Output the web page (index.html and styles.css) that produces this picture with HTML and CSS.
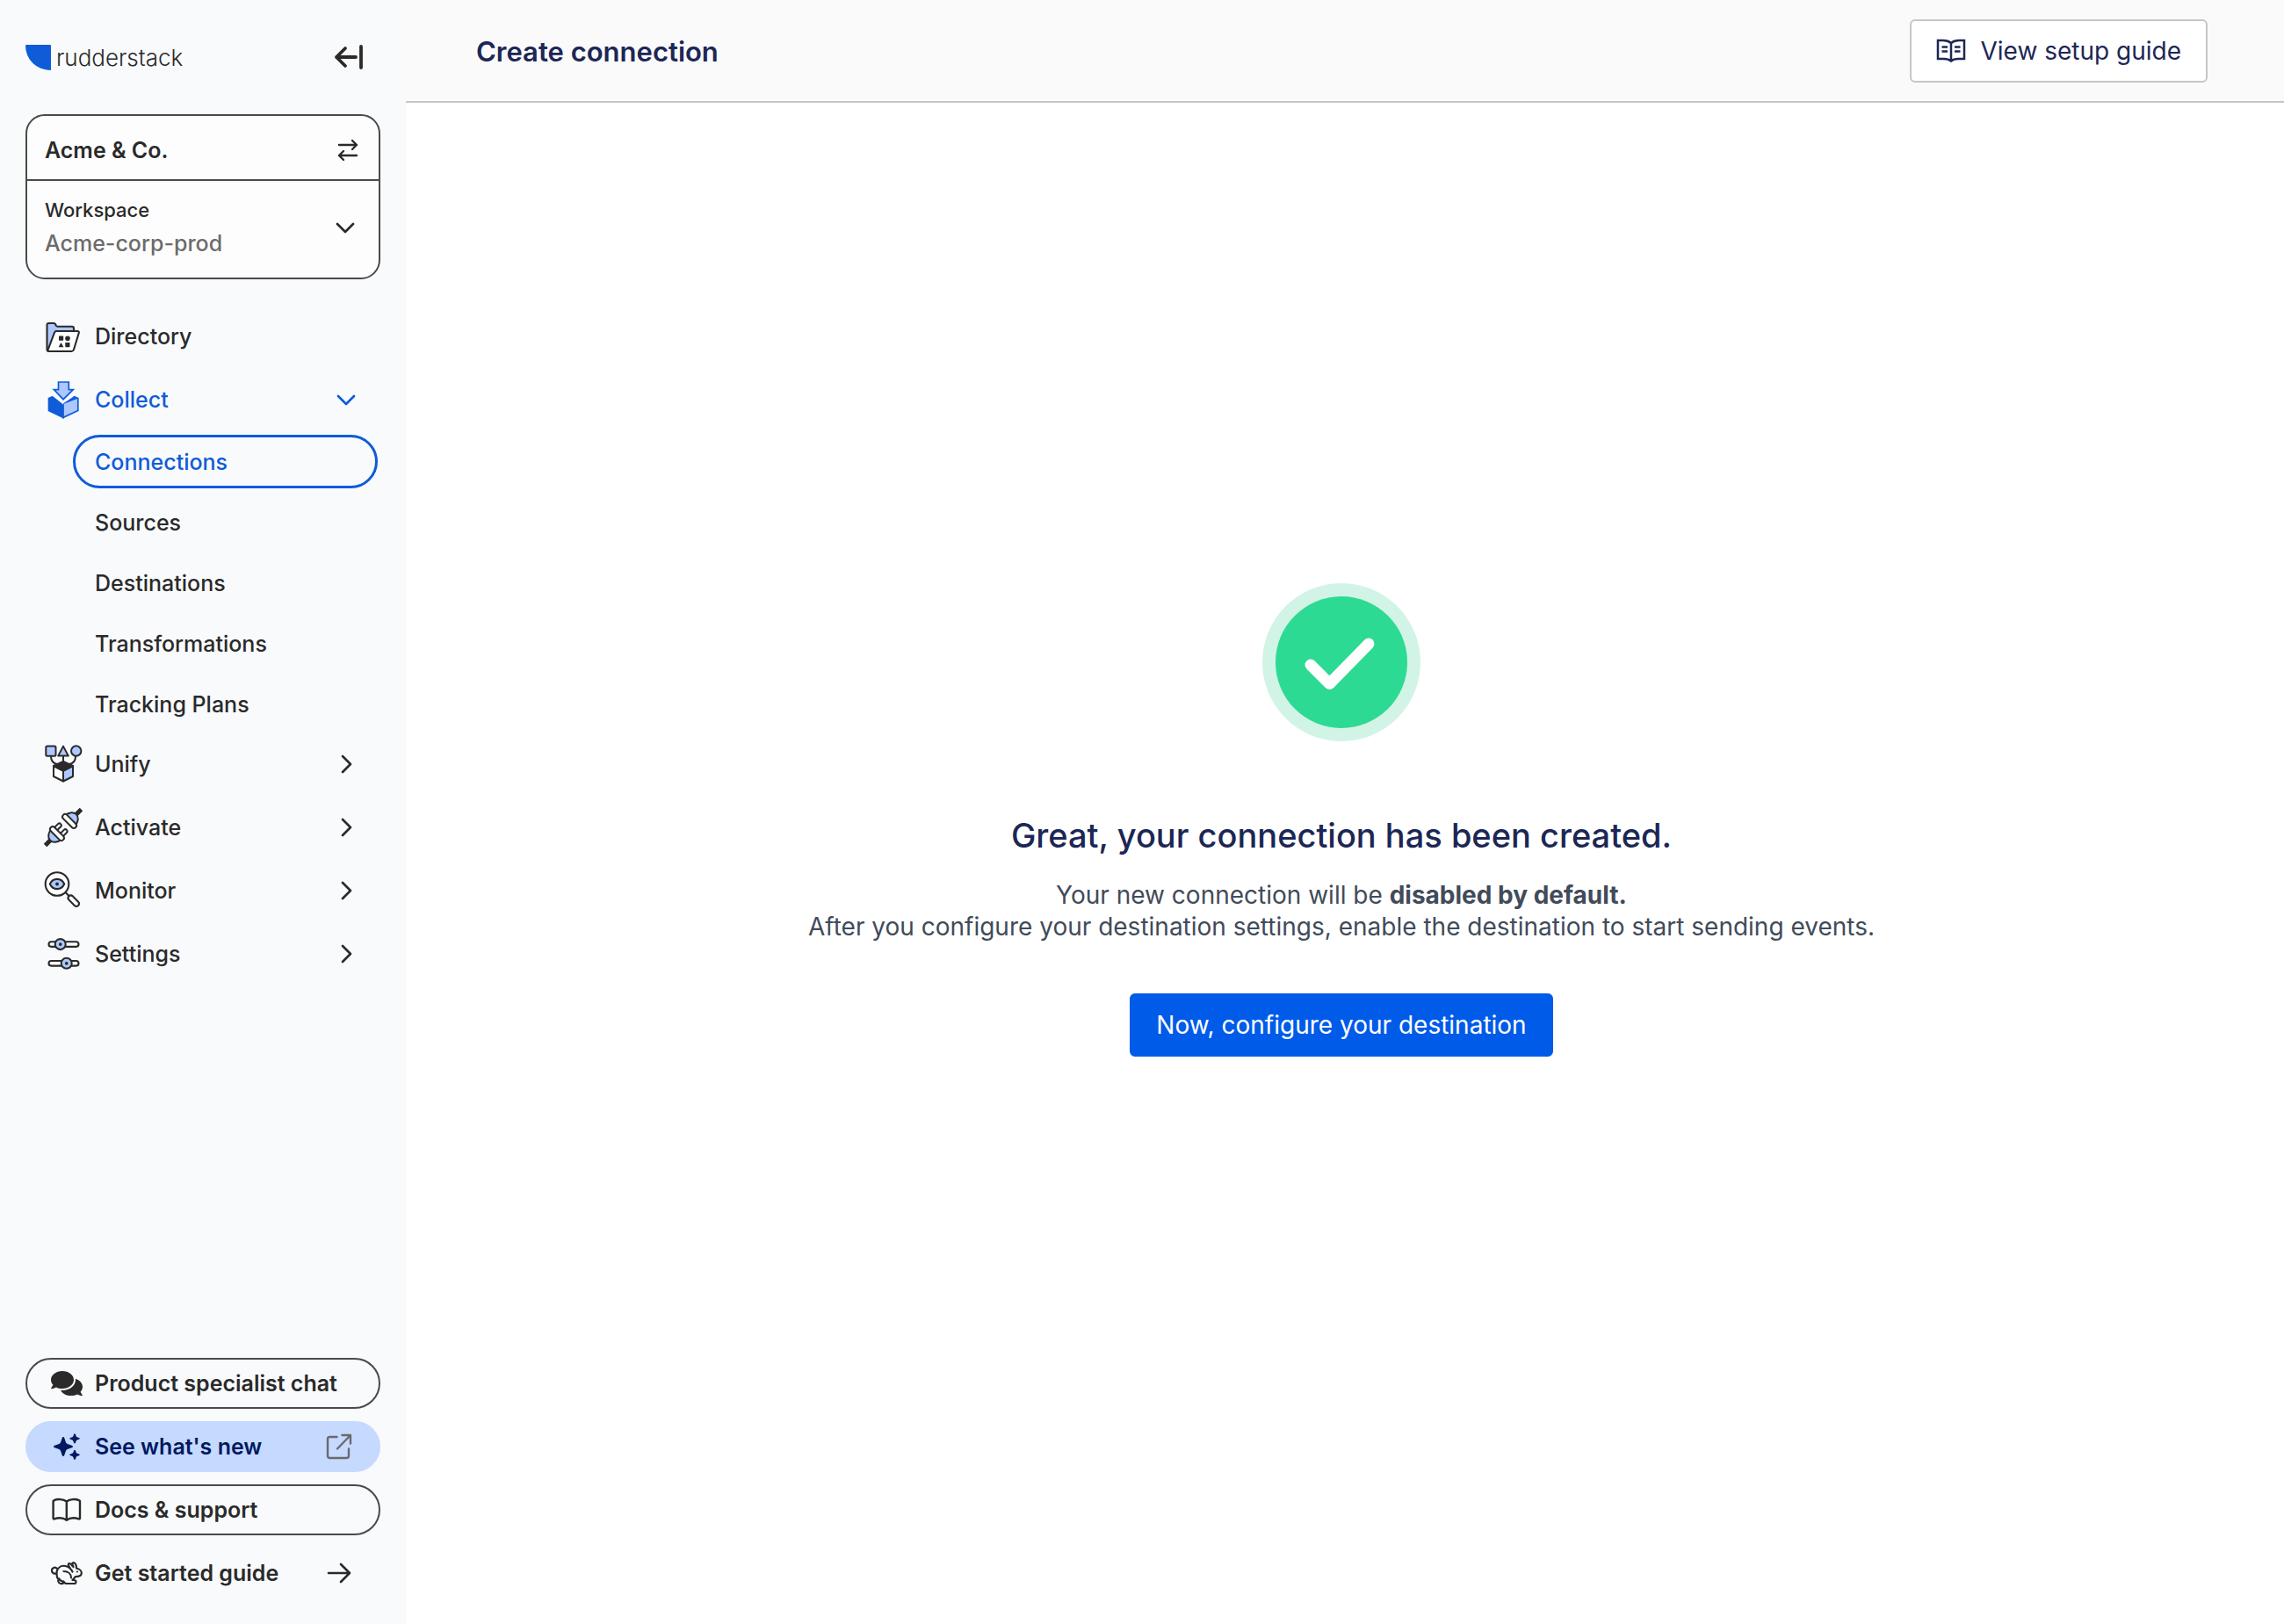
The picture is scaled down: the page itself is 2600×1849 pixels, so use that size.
FILE: index.html
```html
<!DOCTYPE html>
<html lang="en">
<head>
<meta charset="utf-8">
<title>Create connection</title>
<link rel="stylesheet" href="styles.css">
</head>
<body>
<svg class="defs" aria-hidden="true">
  <symbol id="chev-right" viewBox="0 0 24 24"><path d="M8 3l9 9-9 9" fill="none" stroke="currentColor" stroke-width="2.7" stroke-linecap="round" stroke-linejoin="round"/></symbol>
  <symbol id="chev-down" viewBox="0 0 24 24"><path d="M3 8l9 9 9-9" fill="none" stroke="currentColor" stroke-width="2.7" stroke-linecap="round" stroke-linejoin="round"/></symbol>
</svg>
<div class="app">
  <aside class="sidebar">
    <div class="brand-row">
      <a class="brand" href="#">
        <svg class="brand-mark" viewBox="0 0 29 29"><path d="M1 0h27q1 0 1 1v27q0 1-1 1A28 28 0 0 1 0 1q0-1 1-1z" fill="#0f5cd8"/></svg>
        <span>rudderstack</span>
      </a>
      <button class="icon-button" type="button" aria-label="Collapse sidebar">
        <svg class="collapse" viewBox="0 0 34 30"><path d="M25 15H3M13 5L3 15l10 10M31 3v24" fill="none" stroke="currentColor" stroke-width="3.8" stroke-linecap="round" stroke-linejoin="round"/></svg>
      </button>
    </div>

    <div class="account">
      <button class="account-org" type="button">
        <span>Acme &amp; Co.</span>
        <svg class="icon-swap" viewBox="0 0 24 26"><path d="M2 7h20M17 2l5 5-5 5M22 19H2M7 14l-5 5 5 5" fill="none" stroke="currentColor" stroke-width="2.4" stroke-linecap="round" stroke-linejoin="round"/></svg>
      </button>
      <button class="account-workspace" type="button">
        <span class="workspace-text">
          <span class="workspace-label">Workspace</span>
          <span class="workspace-name">Acme-corp-prod</span>
        </span>
        <svg class="chev"><use href="#chev-down"/></svg>
      </button>
    </div>

    <nav class="nav">
      <a class="nav-item" href="#">
        <svg class="nav-icon" viewBox="0 0 44 44" stroke="#2a2a2a" stroke-width="2.1" stroke-linejoin="round">
          <path d="M5 39q-1.500-.5-1.500-2V9q0-2 2-2h6q1 0 1.500 1l1 2q.5.700 1.500.700H32q2 0 2 2V16H14L5 39z" fill="#adc8ff"/>
          <path d="M14.500 16H38q2.500 0 1.700 2.300L34 37q-.6 2-2.500 2H6q-2 0-1.300-2l7.300-19.300q.6-1.700 2.500-1.700z" fill="#fff"/>
          <g stroke="none" fill="#2a2a2a"><rect x="17" y="21.500" width="5.200" height="5.200" rx=".6"/><circle cx="27" cy="24.200" r="2.800"/><path d="M19.500 29l2.900 5.200h-5.800z"/><rect x="24.300" y="29" width="5.200" height="5.200" rx=".6"/></g>
        </svg>
        <span>Directory</span>
      </a>
      <a class="nav-item nav-item-open" href="#">
        <svg class="nav-icon" viewBox="0 0 44 44" stroke="#0f5cd8" stroke-width="1.700">
          <path d="M5.500 20.500l6-2.500L22 26.500v16L5.500 34.500z" fill="#0f5cd8"/>
          <path d="M38.800 20.500L33 18 22 26.500v15.800l16.800-7.800z" fill="#adc8ff"/>
          <path d="M10 16l12 9.500L34 16" fill="none" stroke="#f9fafc" stroke-width="3"/>
          <path d="M22 26.300l11.500-7.300 5.300 1.800L22 27z" fill="#0f5cd8" stroke="none"/>
          <path d="M16.500 2h11.800v8.700h5L22 21.700 11.400 10.700h5.100z" fill="#adc8ff"/>
        </svg>
        <span>Collect</span>
        <svg class="chev"><use href="#chev-down"/></svg>
      </a>
      <div class="subnav">
        <a class="sub-item sub-item-active" href="#">Connections</a>
        <a class="sub-item" href="#">Sources</a>
        <a class="sub-item" href="#">Destinations</a>
        <a class="sub-item" href="#">Transformations</a>
        <a class="sub-item" href="#">Tracking Plans</a>
      </div>
      <a class="nav-item" href="#">
        <svg class="nav-icon" viewBox="0 0 44 44" stroke="#2a2a2a" stroke-width="2" stroke-linejoin="round">
          <g fill="#adc8ff"><rect x="2.300" y="1.500" width="11.200" height="11.200" rx="1.500"/><path d="M22 1.600l5.800 11H16.200z"/><circle cx="36.700" cy="7" r="5.700"/></g>
          <path d="M8 13c0 4 2 8 7 9M36 13c0 4-2 8-7 9M22 13v6" fill="none"/>
          <path d="M11 24l11 5.500v12L11 36z" fill="#fff"/><path d="M33 24l-11 5.500v12L33 36z" fill="#adc8ff"/><path d="M22 19l11 5-11 5.500L11 24z" fill="#2a2a2a"/>
        </svg>
        <span>Unify</span>
        <svg class="chev"><use href="#chev-right"/></svg>
      </a>
      <a class="nav-item" href="#">
        <svg class="nav-icon" viewBox="0 0 44 44" stroke="#2a2a2a" stroke-width="2">
          <g transform="translate(22 22) rotate(45)">
            <path d="M0-20v-9M0 20v9" stroke-width="5"/>
            <path d="M-8-11c0-6 4-10 8-10s8 4 8 10zM-8 11c0 6 4 10 8 10s8-4 8-10z" fill="#adc8ff"/>
            <path d="M-7 8V1.500a2.200 2.200 0 0 1 4.400 0V8M2.600 8V1.500a2.200 2.200 0 0 1 4.400 0V8" fill="#fff"/>
            <rect x="-10" y="-13" width="20" height="6" rx="3" fill="#fff"/>
            <rect x="-10" y="7" width="20" height="6" rx="3" fill="#fff"/>
          </g>
        </svg>
        <span>Activate</span>
        <svg class="chev"><use href="#chev-right"/></svg>
      </a>
      <a class="nav-item" href="#">
        <svg class="nav-icon" viewBox="0 0 44 44" stroke="#2a2a2a" stroke-width="2.100">
          <circle cx="15" cy="14.500" r="13.300" fill="#fff"/>
          <path d="M6.800 14.500c3.500-7.500 12.900-7.500 16.400 0-3.500 7.500-12.900 7.500-16.400 0z" fill="#adc8ff"/>
          <circle cx="15" cy="14.500" r="1.900" fill="#2a2a2a" stroke="none"/>
          <path d="M24.500 24l4.500 4.500"/>
          <rect x="-3" y="-1" width="15" height="6" rx="3" transform="translate(32 29) rotate(45)" fill="#fff"/>
        </svg>
        <span>Monitor</span>
        <svg class="chev"><use href="#chev-right"/></svg>
      </a>
      <a class="nav-item" href="#">
        <svg class="nav-icon" viewBox="0 0 44 44" stroke="#2a2a2a" stroke-width="2.100">
          <g fill="#fff"><rect x="5.500" y="8.300" width="34" height="5.600" rx="2.800"/><rect x="5.500" y="30" width="34" height="5.600" rx="2.800"/></g>
          <g fill="#adc8ff"><circle cx="18.700" cy="11.100" r="6"/><circle cx="25.700" cy="32.800" r="6"/></g>
          <g fill="#2a2a2a" stroke="none"><circle cx="18.700" cy="11.100" r="1.900"/><circle cx="25.700" cy="32.800" r="1.900"/></g>
        </svg>
        <span>Settings</span>
        <svg class="chev"><use href="#chev-right"/></svg>
      </a>
    </nav>

    <div class="help">
      <button class="pill pill-outline" type="button">
        <svg class="pill-icon" viewBox="0 -32 576 576"><path fill="currentColor" d="M416 192c0-88.400-93.100-160-208-160S0 103.600 0 192c0 34.300 14.100 65.900 38 92-13.400 30.200-35.500 54.200-35.800 54.500-2.200 2.300-2.800 5.700-1.500 8.700S4.800 352 8 352c36.600 0 66.900-12.300 88.700-25 32.200 15.700 70.300 25 111.300 25 114.900 0 208-71.600 208-160zm122 220c23.900-26 38-57.700 38-92 0-66.900-53.500-124.200-129.300-148.100.9 6.600 1.300 13.300 1.300 20.100 0 105.900-107.700 192-240 192-10.800 0-21.300-.8-31.700-1.900C207.800 439.600 281.800 480 368 480c41 0 79.100-9.200 111.300-25 21.800 12.700 52.100 25 88.700 25 3.200 0 6.100-1.900 7.300-4.800 1.300-2.900.7-6.300-1.500-8.700-.3-.3-22.400-24.200-35.800-54.500z"/></svg>
        <span>Product specialist chat</span>
      </button>
      <a class="pill pill-new" href="#">
        <svg class="pill-icon" viewBox="0 0 36 36" fill="currentColor"><path d="M14 7q1 0 1.300 1.200l1.700 5q.5 1.300 1.800 1.800l5 1.700q1.200.3 1.200 1.300t-1.200 1.300l-5 1.700q-1.300.5-1.800 1.800l-1.700 5Q15 29 14 29t-1.300-1.200l-1.700-5q-.5-1.300-1.800-1.800l-5-1.700Q3 19 3 18t1.200-1.300l5-1.700q1.300-.5 1.800-1.800l1.700-5Q13 7 14 7z"/><path d="M27 3.200q.7 0 1 1l.7 2.100q.3.700 1 1l2.100.7q1 .3 1 .8t-1 .9l-2.100.7q-.7.300-1 1l-.7 2.100q-.3 1-1 1t-1-1l-.7-2.100q-.3-.7-1-1l-2.100-.7q-1-.4-1-.9t1-.8l2.100-.7q.7-.3 1-1l.7-2.100q.3-1 1-1z"/><path d="M27 21.700q.7 0 1 1l.7 2.100q.3.700 1 1l2.100.7q1 .3 1 .8t-1 .9l-2.100.7q-.7.300-1 1l-.7 2.100q-.3 1-1 1t-1-1l-.7-2.100q-.3-.7-1-1l-2.100-.7q-1-.4-1-.9t1-.8l2.100-.7q.7-.3 1-1l.7-2.100q.3-1 1-1z"/></svg>
        <span>See what's new</span>
        <svg class="pill-end pill-end-muted" viewBox="0 0 30 30"><path d="M12.500 4H4.500Q2 4 2 6.500v19Q2 28 4.500 28h19q2.500 0 2.500-2.500v-8M18.500 2H28v9.500M28 2L13 17.500" fill="none" stroke="currentColor" stroke-width="2.400" stroke-linecap="round" stroke-linejoin="round"/></svg>
      </a>
      <a class="pill pill-outline" href="#">
        <svg class="pill-icon" viewBox="0 0 36 36"><path d="M17.800 8.500C14 5.500 7 5.500 3.300 7.300q-.7.300-.7 1V27.500q0 1.300 1.200.9C8 27 14 27 17.800 29.700 21.500 27 27.500 27 31.800 28.400q1.200.4 1.200-.9V8.300q0-.7-.7-1C28.500 5.500 21.500 5.500 17.800 8.500V29" fill="none" stroke="currentColor" stroke-width="2.400" stroke-linejoin="round"/></svg>
        <span>Docs &amp; support</span>
      </a>
      <a class="pill" href="#">
        <svg class="pill-icon" viewBox="0 0 36 36" fill="none" stroke="currentColor" stroke-width="2.200" stroke-linecap="round" stroke-linejoin="round">
          <path d="M7 13A3.400 3.400 0 1 0 5.800 18.300M6.800 15.500C8.500 11 12.500 9 16.500 10c4 1 6.500 3.500 8 6.500M14.500 16c5 0 8.500 3 8.500 7.500M21.500 12C19.500 9.500 19.300 7.500 20.700 7.200c1.300-.2 2.800 1 3.800 2.800M25.500 11C24 8 24.200 6 25.500 6c2.200.5 3.500 3 3.500 6.500 3.500.7 6 3.200 5.800 5.800-.3 2.500-3.300 3.700-6.800 3.700L24.500 26H26q2.500 0 2.500 2t-2 2H17L8 24.500C6.500 22.500 6.300 19 6.800 15.500M14.500 27.500c1 1.500-.5 3-3.500 2.500-3-.5-3.500-4-1.500-5.500"/>
          <circle cx="30" cy="16.500" r="1.100" fill="currentColor" stroke="none"/>
        </svg>
        <span>Get started guide</span>
        <svg class="pill-end" viewBox="0 0 30 30"><path d="M3 15h24M17 5l10 10-10 10" fill="none" stroke="currentColor" stroke-width="2.600" stroke-linecap="round" stroke-linejoin="round"/></svg>
      </a>
    </div>
  </aside>

  <div class="page">
    <header class="topbar">
      <h1>Create connection</h1>
      <button class="button" type="button">
        <svg class="guide-icon" viewBox="0 0 34 28"><path d="M17 5Q13.500 2 8 2H2v21h7q5 0 8 2.500Q20 23 25 23h7V2h-6q-5.500 0-9 3v20M6.500 9.500H13M6.500 14.500H13M21 9.500h6.500M21 14.500h6.500" fill="none" stroke="currentColor" stroke-width="2.500"/></svg>
        <span>View setup guide</span>
      </button>
    </header>
    <main class="content">
      <svg class="success" viewBox="0 0 180 180"><circle cx="90" cy="90" r="90" fill="#d2f4e6"/><circle cx="90" cy="90" r="75" fill="#2dda93"/><path d="M55 93l21.500 21.500L121 69" fill="none" stroke="#fff" stroke-width="13" stroke-linecap="round" stroke-linejoin="round"/></svg>
      <h2>Great, your connection has been created.</h2>
      <p>Your new connection will be <strong>disabled by default.</strong><br>After you configure your destination settings, enable the destination to start sending events.</p>
      <button class="button button-primary" type="button">Now, configure your destination</button>
    </main>
  </div>
</div>
</body>
</html>
```
FILE: styles.css
```css
* { box-sizing: border-box; }

body {
  margin: 0;
  font-family: Inter, "Liberation Sans", sans-serif;
  font-size: 25px;
  font-weight: 500;
  color: #2a2a2a;
  background: #fff;
}

a { color: inherit; text-decoration: none; }
button { font: inherit; color: inherit; cursor: pointer; }
svg { display: block; flex: none; }
.defs { position: absolute; width: 0; height: 0; }

.app { display: flex; min-height: 100vh; }

/* Sidebar */
.sidebar {
  flex: none;
  width: 462px;
  display: flex;
  flex-direction: column;
  padding: 29px;
  background: #f9fafc;
}

.brand-row {
  display: flex;
  align-items: center;
  justify-content: space-between;
  height: 72px;
  padding-right: 19px;
}
.brand { display: flex; align-items: center; gap: 6px; font-size: 26px; font-weight: 300; }
.brand-mark { width: 29px; height: 29px; }
.icon-button { padding: 0; border: 0; background: none; }
.collapse { width: 34px; height: 30px; }

.account {
  margin-top: 29px;
  border: 2px solid #4a4a4a;
  border-radius: 22px;
  background: #fdfdfe;
  overflow: hidden;
}
.account button {
  display: flex;
  align-items: center;
  justify-content: space-between;
  width: 100%;
  border: 0;
  background: none;
  text-align: left;
}
.account .account-org { height: 74px; padding: 6px 23px 0 20px; border-bottom: 2px solid #4a4a4a; font-weight: 600; }
.account .account-workspace { height: 110px; padding: 0 26px 4px 20px; }
.icon-swap { width: 24px; height: 26px; }
.workspace-text { display: flex; flex-direction: column; }
.workspace-label { font-size: 22px; line-height: 36px; }
.workspace-name { line-height: 40px; color: #6b6b6b; }
.chev { width: 24px; height: 24px; margin-left: auto; }

.nav { margin-top: 29px; }
.nav-item {
  display: flex;
  align-items: center;
  height: 72px;
  gap: 14px;
  padding: 0 27px 0 21px;
}
.nav-icon { width: 44px; height: 44px; }
.nav-item-open, .sub-item-active { color: #0f5cd8; }
.subnav {
  display: flex;
  flex-direction: column;
  gap: 8px;
  padding: 4px 3px 2px 54px;
}
.sub-item {
  display: flex;
  align-items: center;
  height: 61px;
  padding-left: 22px;
  border: 3px solid transparent;
  border-radius: 31px;
}
.sub-item-active { border-color: #0f5cd8; }

.help { display: flex; flex-direction: column; gap: 14px; margin-top: auto; }
.pill {
  display: flex;
  align-items: center;
  gap: 14px;
  height: 58px;
  padding: 0 30px 0 27px;
  border: 2px solid transparent;
  border-radius: 29px;
  background: none;
  font-weight: 600;
}
.pill-outline { border-color: #4a4a4a; }
.pill-new { background: #c6d9ff; border-color: #c6d9ff; color: #00195f; }
.pill-icon { width: 36px; height: 36px; }
.pill-end { width: 30px; height: 30px; margin-left: auto; }
.pill-end-muted { color: #6b6b6b; }

/* Page */
.page { flex: 1; display: flex; flex-direction: column; }
.topbar {
  display: flex;
  align-items: center;
  justify-content: space-between;
  height: 117px;
  padding: 0 87px 0 80px;
  border-bottom: 2px solid #c4c6c8;
  background: #fafafa;
  color: #1c2755;
}
h1 { margin: 0; padding-top: 2px; font-size: 31px; font-weight: 600; }
.button {
  display: flex;
  align-items: center;
  gap: 16px;
  height: 72px;
  padding: 0 28px;
  border: 2px solid #c4c6c8;
  border-radius: 6px;
  background: #fff;
  font-size: 28px;
  font-weight: 400;
}
.guide-icon { width: 34px; height: 28px; }

.content {
  flex: 1;
  display: flex;
  flex-direction: column;
  align-items: center;
  justify-content: center;
  padding: 0 8px 100px 0;
  text-align: center;
}
.success { width: 180px; height: 180px; }
h2 { margin: 80px 0 0; font-size: 38px; line-height: 54px; font-weight: 500; color: #1c2755; }
p { margin: 23px 0 0; font-size: 28px; font-weight: 400; line-height: 36px; color: #414b5a; }
.button-primary { margin-top: 58px; border-color: #005be9; background: #005be9; color: #fff; }
```
